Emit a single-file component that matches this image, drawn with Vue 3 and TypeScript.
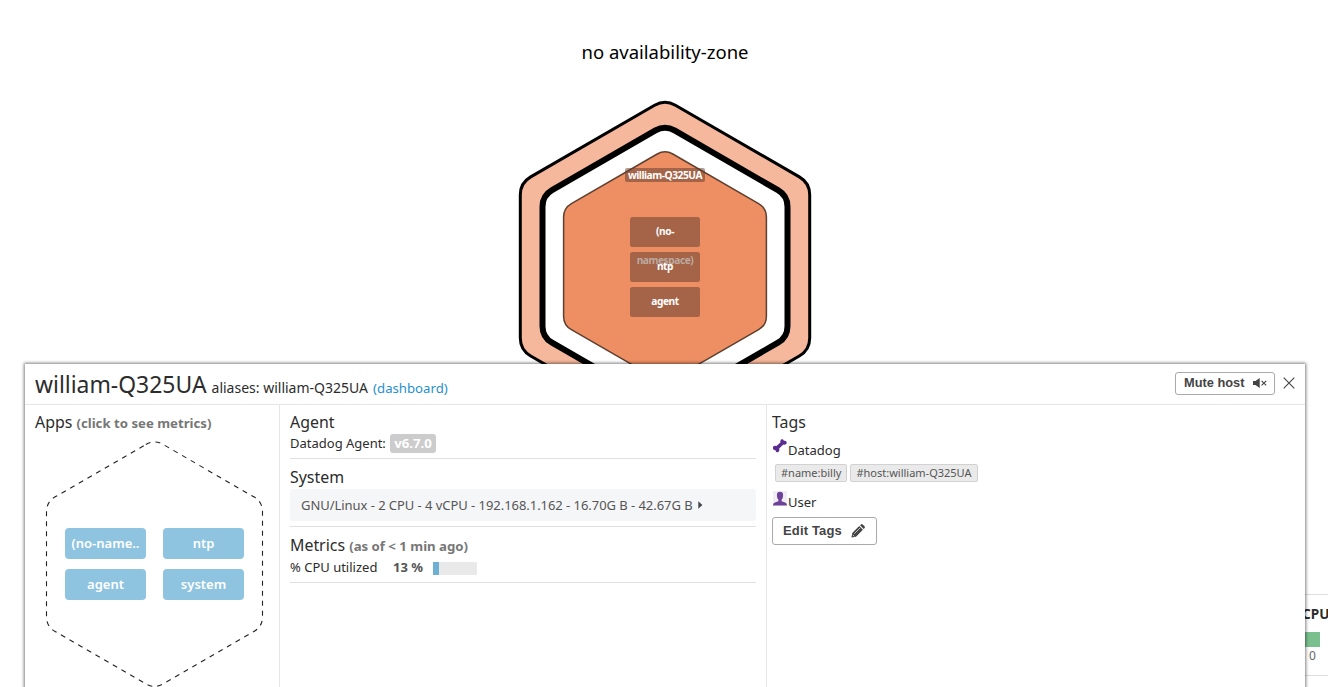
<script setup lang="ts">
interface HexShape {
  name: string
  path: string
}

/** Builds a pointy-topped hexagon path whose corners are softened by quadratic curves. */
function hexPath(cx: number, cy: number, halfWidth: number, soften: number): string {
  const radius = halfWidth / Math.cos(Math.PI / 6)
  const corners = Array.from({ length: 6 }, (_, i) => {
    const angle = -Math.PI / 2 + (i * Math.PI) / 3
    return { x: cx + radius * Math.cos(angle), y: cy + radius * Math.sin(angle) }
  })
  const toward = (a: { x: number; y: number }, b: { x: number; y: number }) => {
    const t = soften / radius
    return `${(a.x + (b.x - a.x) * t).toFixed(2)} ${(a.y + (b.y - a.y) * t).toFixed(2)}`
  }
  return (
    corners
      .map((c, i) => {
        const prev = corners[(i + 5) % 6]
        const next = corners[(i + 1) % 6]
        return `${i === 0 ? 'M' : 'L'}${toward(c, prev)} Q${c.x.toFixed(2)} ${c.y.toFixed(2)} ${toward(c, next)}`
      })
      .join(' ') + ' Z'
  )
}

const zoneHexes: HexShape[] = [
  { name: 'outer', path: hexPath(665, 266.4, 144.7, 12) },
  { name: 'selected', path: hexPath(665, 266.4, 122.5, 11) },
  { name: 'host', path: hexPath(665, 266.6, 101.4, 9) },
]

const appsHex = hexPath(154.5, 564.2, 108, 10)
const apps: string[] = ['(no-name..', 'ntp', 'agent', 'system']
const hostTags: string[] = ['#name:billy', '#host:william-Q325UA']
const cpuPercent = 13
</script>

<template>
  <main class="stage">
    <h2 class="zone">no availability-zone</h2>
    <svg class="map" width="1328" height="687" viewBox="0 0 1328 687">
      <path v-for="hex in zoneHexes" :key="hex.name" :class="hex.name" :d="hex.path" />
      <rect class="shade" x="625" y="168" width="80" height="14" rx="2" />
      <text class="label name" x="665" y="179">william-Q325UA</text>
      <rect class="shade" x="630" y="217" width="70" height="30" rx="2.5" />
      <rect class="shade" x="630" y="252" width="70" height="30" rx="2.5" />
      <rect class="shade" x="630" y="287" width="70" height="30" rx="2.5" />
      <text class="label" x="665" y="235">(no-</text>
      <text class="label faded" x="665" y="264">namespace)</text>
      <text class="label" x="665" y="270">ntp</text>
      <text class="label" x="665" y="305">agent</text>
    </svg>

    <aside class="legend">
      <b class="legend-title">CPU</b>
      <span class="legend-bar"></span>
      <span class="legend-min">0</span>
    </aside>

    <section class="panel">
      <header class="head">
        <h1 class="host-name">william-Q325UA</h1>
        <span class="aliases">aliases: william-Q325UA</span>
        <a class="link">(dashboard)</a>
        <button class="btn mute">
          <span>Mute host</span>
          <svg width="16" height="12" viewBox="0 0 16 12">
            <path d="M0 3.9H2.5L6.7 1V11L2.5 8.1H0Z" fill="#444" />
            <path d="M8.6 3.8L13.2 8.4M13.2 3.8L8.6 8.4" stroke="#444" stroke-width="1.1" fill="none" />
          </svg>
        </button>
        <svg class="close" width="12" height="12" viewBox="0 0 12 12">
          <path d="M0.7 0.7L11.3 11.3M11.3 0.7L0.7 11.3" stroke="#444" stroke-width="1.1" />
        </svg>
      </header>

      <div class="columns">
        <section class="apps">
          <h3 class="title">Apps <small>(click to see metrics)</small></h3>
          <div class="apps-hex">
            <svg class="dashes" width="220" height="250" viewBox="45 439 220 250">
              <path :d="appsHex" />
            </svg>
            <div class="app-grid">
              <span v-for="app in apps" :key="app" class="app">{{ app }}</span>
            </div>
          </div>
        </section>

        <section class="details">
          <div class="block agent">
            <h3 class="title">Agent</h3>
            <p class="row">Datadog Agent: <b class="version">v6.7.0</b></p>
          </div>
          <div class="block system">
            <h3 class="title">System</h3>
            <p class="summary">
              <span>GNU/Linux - 2 CPU - 4 vCPU - 192.168.1.162 - 16.70G B - 42.67G B</span>
              <svg width="5" height="8" viewBox="0 0 5 8"><path d="M0.3 0.3L4.4 4L0.3 7.7Z" fill="#444" /></svg>
            </p>
          </div>
          <div class="block metrics">
            <h3 class="title">Metrics <small>(as of &lt; 1 min ago)</small></h3>
            <p class="row metric">
              <span class="metric-name">% CPU utilized</span>
              <b class="metric-value">{{ cpuPercent }} %</b>
              <span class="meter"><i :style="{ width: cpuPercent + '%' }"></i></span>
            </p>
          </div>
        </section>

        <section class="tags">
          <h3 class="title">Tags</h3>
          <div class="source datadog">
            <svg width="15" height="15" viewBox="0 0 15 15">
              <path
                d="M0 8Q0.8 6.4 3.4 6.9L7.4 3.5Q7 0.8 8.6 0.3Q10.5-0.2 10.9 1.7Q13.1 1.5 13.6 3Q14 5 12.2 5.4Q11 5.8 10.3 5.6L6.2 9.6Q6.6 11.2 6 12.3Q5 13.8 3.3 13Q2.5 12.3 2.6 11.2Q0.7 11.2 0.1 10Q-0.3 9 0 8Z"
                fill="#5b2d8e"
              />
            </svg>
            <span>Datadog</span>
          </div>
          <div class="chips">
            <span v-for="tag in hostTags" :key="tag" class="chip">{{ tag }}</span>
          </div>
          <div class="source user">
            <svg width="15" height="15" viewBox="0 0 15 15">
              <rect width="14" height="15" fill="#f0eef2" />
              <path
                d="M3.9 4Q3.9 0.7 7 0.7T10.1 4Q10.2 7.2 8.6 8.8V10.2L12.2 11.5Q14 12.2 14 14.5H0Q0 12.2 1.8 11.5L5.4 10.2V8.8Q3.8 7.2 3.9 4Z"
                fill="#6e4299"
              />
            </svg>
            <span>User</span>
          </div>
          <button class="btn edit">
            <span>Edit Tags</span>
            <svg width="14" height="14" viewBox="0 0 14 14">
              <path
                d="M0.4 13.6L1.3 9L8.2 2.1L11.9 5.8L5 12.7ZM9 1.3L10 0.4Q10.9-0.2 11.7 0.5L13.5 2.3Q14.2 3.1 13.6 4L12.7 5Z"
                fill="#444"
              />
              <path d="M9 4L3.4 9.6M1.7 10.8L3.2 12.3" stroke="#fff" stroke-width="0.7" />
            </svg>
          </button>
        </section>
      </div>
    </section>
  </main>
</template>

<style>
body {
  background: #fff;
}
</style>

<style scoped>
.stage {
  position: relative;
  width: 1328px;
  height: 687px;
  overflow: hidden;
  font-family: "Noto Sans", sans-serif;
  font-size: 13px;
  color: #2c2c2c;
}
h1, h2, h3, p {
  margin: 0;
  font-weight: 400;
}
.zone {
  padding: 39px 0 0 2px;
  text-align: center;
  font-size: 18.5px;
  line-height: 26px;
  color: #000;
}
.map {
  position: absolute;
  inset: 0;
}
.outer { fill: #f5b89c; stroke: #000; stroke-width: 3; }
.selected { fill: #fff; stroke: #000; stroke-width: 6; }
.host { fill: #ed8e63; stroke: #5f4030; stroke-width: 1.5; }
.shade { fill: #5e3a2b; fill-opacity: 0.5; }
.label {
  fill: #fff;
  font-size: 10.2px;
  font-weight: 700;
  text-anchor: middle;
  letter-spacing: -0.45px;
}
.faded { fill: #bcaaa0; letter-spacing: -0.45px; }

.legend {
  position: absolute;
  left: 1290px;
  top: 594px;
  width: 60px;
  height: 80px;
  border: solid #ddd;
  border-width: 1px 0;
  display: flex;
  flex-direction: column;
}
.legend-title { margin: 10px 0 0 12px; font-size: 13.6px; line-height: 18px; }
.legend-bar { margin-top: 9px; width: 30px; height: 15px; background: #7ac08e; }
.legend-min { margin: 1px 0 0 19px; font-size: 12px; line-height: 16px; color: #666; }

.panel {
  position: absolute;
  left: 25px;
  top: 364px;
  width: 1280px;
  height: 340px;
  background: #fff;
  box-shadow: 0 0 3px 1px rgba(0, 0, 0, 0.5);
}
.head {
  display: flex;
  align-items: baseline;
  box-sizing: border-box;
  height: 41px;
  padding: 5px 10px 0 10px;
  border-bottom: 1px solid #e6e6e6;
}
.host-name { font-size: 22.9px; line-height: 31px; }
.aliases { margin-left: 5px; font-size: 14px; }
.link { margin-left: 5px; font-size: 13.2px; color: #278fce; }
.btn {
  display: flex;
  align-items: center;
  box-sizing: border-box;
  border: 1px solid #aaa;
  border-radius: 3px;
  background: #fff;
  color: #444;
  font: 700 13px "Liberation Sans", Arial, sans-serif;
}
.mute { align-self: flex-start; margin: 3px 8px 0 auto; width: 100px; height: 23px; padding: 0 5px 2px 8px; justify-content: space-between; font-size: 12.8px; }
.close { align-self: flex-start; margin-top: 8px; }

.columns { display: flex; height: 299px; }
.title { font-size: 15.9px; line-height: 22px; }
.title small { font-size: 13.2px; font-weight: 700; color: #777; }
.apps { box-sizing: border-box; width: 255px; padding: 6px 0 0 10px; border-right: 1px solid #e6e6e6; }
.apps-hex { display: grid; margin: 5px 0 0 10px; width: 220px; height: 250px; }
.apps-hex > * { grid-area: 1 / 1; }
.dashes path { fill: none; stroke: #222; stroke-width: 1.1; stroke-dasharray: 5 5; }
.app-grid { display: grid; grid-template-columns: 81px 81px; gap: 10px 17px; align-self: start; justify-content: start; margin: 89px 0 0 20px; }
.app {
  height: 31px;
  border-radius: 4px;
  background: #8ec4e0;
  color: #fff;
  font-weight: 600;
  line-height: 30px;
  text-align: center;
}
.details { width: 466px; padding: 6px 10px 0; border-right: 1px solid #e6e6e6; }
.block { box-sizing: border-box; border-bottom: 1px solid #e0e0e0; }
.row { line-height: 20px; }
.agent { height: 48px; }
.version { display: inline-block; padding: 0 4px; margin-left: 1px; border-radius: 3px; background: #ccc; color: #fff; font-size: 13.2px; line-height: 19px; }
.system { height: 68px; padding-top: 7px; }
.summary { display: flex; align-items: center; gap: 5px; height: 32px; margin-top: 1px; padding-left: 11px; border-radius: 3px; background: #f5f6f8; color: #555; letter-spacing: -0.05px; }
.metrics { height: 56px; padding-top: 7px; }
.metric { display: flex; align-items: center; }
.metric-name { width: 103px; }
.metric-value { width: 40px; color: #555; }
.meter { width: 44px; height: 13px; margin-top: 2px; background: #e9e9e9; }
.meter i { display: block; height: 100%; background: #6eafd4; }

.tags { padding: 6px 5px 0; }
.source { display: flex; }
.source svg { margin-left: 1px; }
.source span { line-height: 18px; }
.datadog { padding-top: 6px; }
.datadog span { padding-top: 2px; }
.chips { display: flex; gap: 3px; margin: 5px 0 0 3px; }
.chip {
  box-sizing: border-box;
  height: 18px;
  padding: 0 5px;
  border: 1px solid #d2d2d2;
  border-radius: 2px;
  background: #eaeaea;
  color: #555;
  font-size: 11px;
  line-height: 16px;
}
.user { margin-top: 9px; }
.user span { padding-top: 2px; }
.edit { margin-top: 6px; width: 105px; height: 28px; padding: 0 11px 1px 10px; justify-content: space-between; }
.edit span { letter-spacing: 0.15px; }
</style>
